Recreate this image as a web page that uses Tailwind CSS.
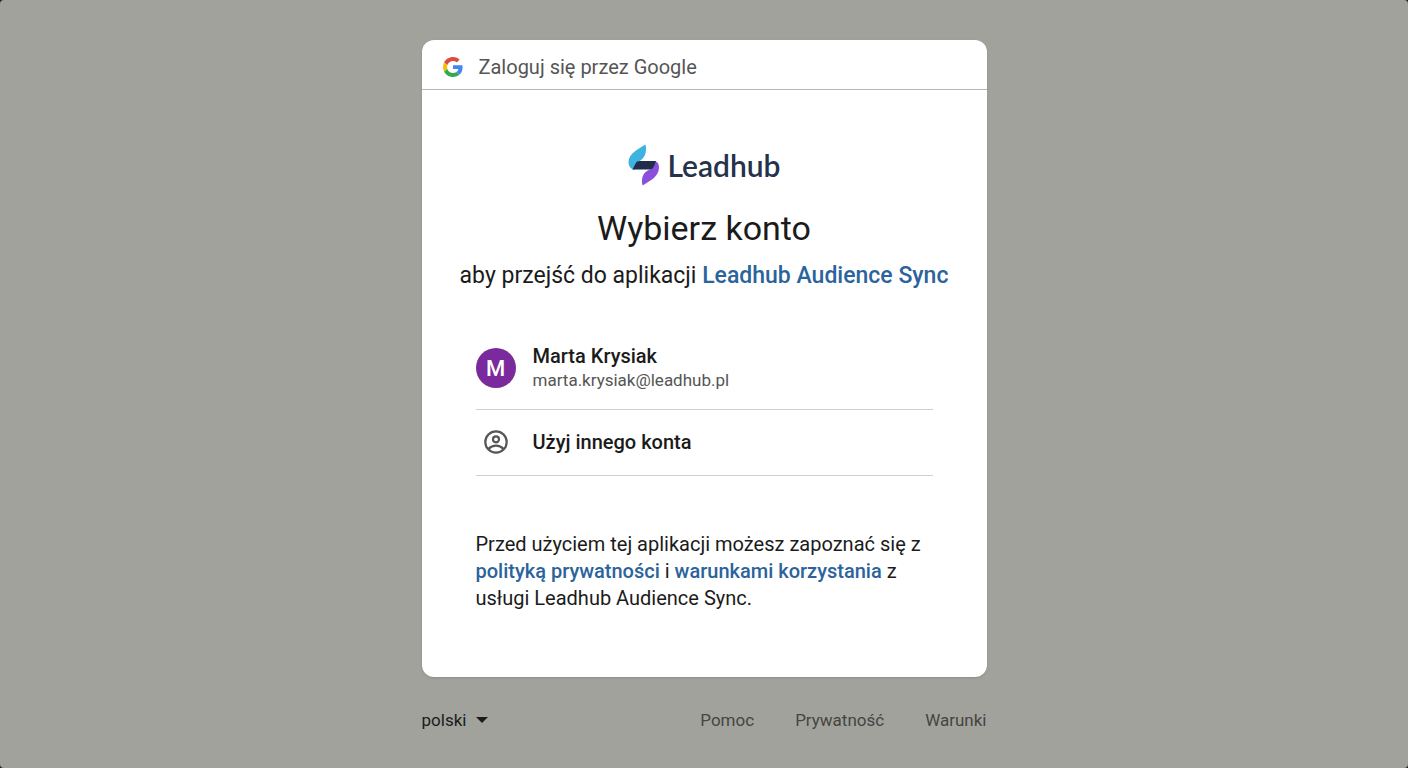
<!DOCTYPE html>
<html lang="pl">
<head>
  <meta charset="UTF-8">
  <meta name="viewport" content="width=device-width, initial-scale=1.0">
  <script src="https://cdn.jsdelivr.net/npm/@tailwindcss/browser@4"></script>
  <title>Zaloguj się przez Google</title>
</head>
<body class="bg-[#22221f] font-['Roboto',sans-serif] text-[#1b1b1b]">
  <div class="min-h-screen rounded-[4px] bg-[#a2a29c] px-4 pt-10 pb-8">
    <div class="mx-auto w-full max-w-[565px]">
      <main class="rounded-xl bg-white shadow-sm">
        <header class="flex h-[50px] items-center gap-4 border-b border-[#b5b5b5] px-[21px] pt-1">
          <svg class="size-5" viewBox="0 0 48 48" aria-hidden="true">
            <path fill="#db4c43" d="M24 9.5c3.54 0 6.71 1.22 9.21 3.6l6.85-6.85C35.9 2.38 30.47 0 24 0 14.62 0 6.51 5.38 2.56 13.22l7.98 6.19C12.43 13.72 17.74 9.5 24 9.5z"/>
            <path fill="#4285F4" d="M46.98 24.55c0-1.57-.15-3.09-.38-4.55H24v9.02h12.94c-.58 2.96-2.26 5.48-4.78 7.18l7.73 6c4.51-4.18 7.09-10.36 7.09-17.65z"/>
            <path fill="#FBBC05" d="M10.53 28.59c-.48-1.45-.76-2.99-.76-4.59s.27-3.14.76-4.59l-7.98-6.19C.92 16.46 0 20.12 0 24s.92 7.54 2.56 10.78l7.97-6.19z"/>
            <path fill="#34A853" d="M24 48c6.48 0 11.93-2.13 15.89-5.81l-7.73-6c-2.15 1.45-4.92 2.3-8.16 2.3-6.26 0-11.57-4.22-13.47-9.91l-7.98 6.19C6.51 42.62 14.62 48 24 48z"/>
          </svg>
          <p class="text-xl leading-6 text-[#555]">Zaloguj się przez Google</p>
        </header>

        <div class="px-[54px] pt-[53px] pb-[65px]">
          <div class="flex h-[44px] items-center justify-center gap-2">
            <svg class="h-[42px] w-8" viewBox="0 0 32 42" aria-hidden="true">
              <path fill="#3db3e0" d="M18.500 .500C12 4.500 2 9 1.500 18C1.500 22 3.500 25 7.500 26L11 17.500C17 16 20.500 8.500 18.500 .500Z"/>
              <path fill="#8a50dc" d="M15.500 41.500C22 37.500 31.500 33 32 24C32 20 31 17.500 27 17L23.500 25.500C17 27 13.500 33.500 15.500 41.500Z"/>
              <path fill="#222c4d" d="M12.500 17H29L27.500 21C26 24.500 25 25.500 22.500 25.500H5.500L8 20.500C9.200 18 10.200 17 12.500 17Z"/>
            </svg>
            <span class="font-['Lato',sans-serif] text-[30px] leading-9 font-semibold text-[#25324b]">Leadhub</span>
          </div>

          <h1 class="mt-[19px] text-center text-[34px] leading-[44px]">Wybierz konto</h1>
          <p class="-mx-4 mt-3 text-center text-[23px] leading-7">aby przejść do aplikacji <a href="#" class="font-medium text-[#2b639c]">Leadhub Audience Sync</a></p>

          <ul class="mt-[41px]">
            <li class="border-b border-[#d0d0d0]">
              <button type="button" class="flex h-[78px] w-full items-center gap-[17px] pb-1 text-left">
                <span class="flex size-10 items-center justify-center rounded-full bg-[#7a2a9c] text-[22px] font-medium text-white">M</span>
                <span>
                  <span class="block text-xl leading-6 font-medium">Marta Krysiak</span>
                  <span class="block text-[17px] leading-6 text-[#555]">marta.krysiak@leadhub.pl</span>
                </span>
              </button>
            </li>
            <li class="border-b border-[#d0d0d0]">
              <button type="button" class="flex h-[65px] w-full items-center gap-[17px] pb-0.5 text-left">
                <span class="flex w-10 justify-center">
                  <svg class="size-6" viewBox="0 0 24 24" fill="none" stroke="#555" stroke-width="2.200" aria-hidden="true">
                    <circle cx="12" cy="12" r="10.700"/>
                    <circle cx="12" cy="9.300" r="3"/>
                    <path d="M4.500 19c2-2.200 4.500-3.300 7.500-3.300s5.500 1.100 7.500 3.300"/>
                  </svg>
                </span>
                <span class="text-xl leading-6 font-medium">Użyj innego konta</span>
              </button>
            </li>
          </ul>

          <p class="mt-[55px] text-xl leading-[27px]">Przed użyciem tej aplikacji możesz zapoznać się z <a href="#" class="font-medium text-[#2b639c]">polityką prywatności</a> i <a href="#" class="font-medium text-[#2b639c]">warunkami korzystania</a> z usługi Leadhub Audience Sync.</p>
        </div>
      </main>

      <footer class="mt-[31px] flex items-center justify-between text-[17px] leading-6">
        <div class="relative">
          <select aria-label="Język" class="w-[68px] appearance-none bg-transparent">
            <option>polski</option>
          </select>
          <svg class="pointer-events-none absolute top-[9px] right-0.5 h-[6px] w-3" viewBox="0 0 12 6" aria-hidden="true"><path fill="#1b1b1b" d="M0 0h12L6 6z"/></svg>
        </div>
        <nav class="flex gap-[41px] text-[#454541]">
          <a href="#">Pomoc</a>
          <a href="#">Prywatność</a>
          <a href="#">Warunki</a>
        </nav>
      </footer>
    </div>
  </div>
</body>
</html>
